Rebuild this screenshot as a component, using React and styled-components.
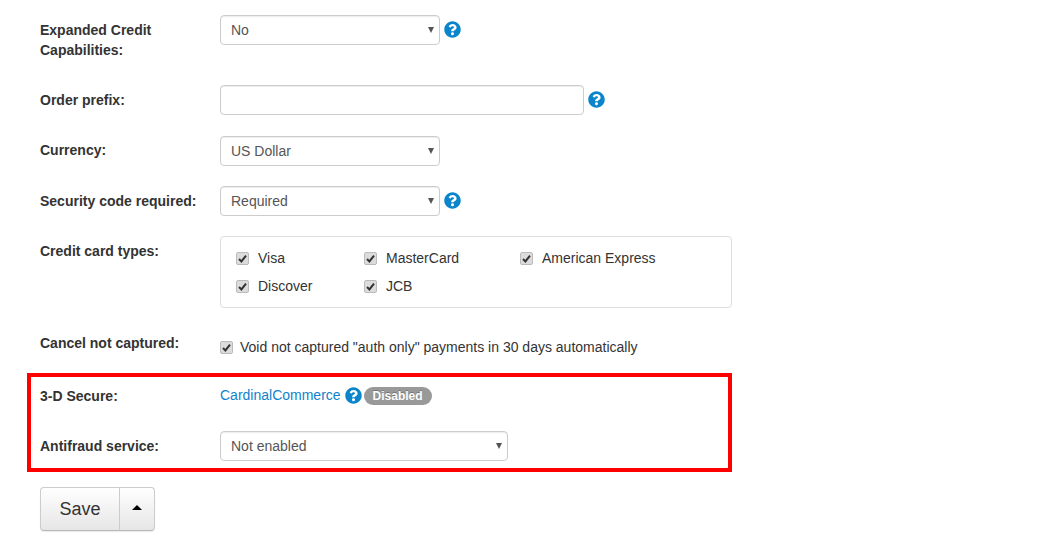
import React from "react";
import styled, { createGlobalStyle } from "styled-components";
import { FaQuestionCircle } from "react-icons/fa";

const GlobalStyle = createGlobalStyle`
  html, body {
    margin: 0;
    padding: 0;
    background: #fff;
  }
  body {
    font-family: "Liberation Sans", Arial, sans-serif;
    font-size: 14px;
    line-height: 20px;
    color: #333;
  }
`;

const Page = styled.form`
  width: 692px;
  padding: 15px 0 13px 40px;
`;

const Row = styled.div`
  display: flex;
  align-items: flex-start;
  margin-bottom: ${(p) => p.$gap ?? 20}px;
`;

const Label = styled.div`
  flex: 0 0 180px;
  padding: ${(p) => p.$top ?? 5}px 20px 0 0;
  box-sizing: border-box;
  font-weight: 700;
`;

const Controls = styled.div`
  display: flex;
  align-items: center;
  flex: 1;
  min-height: 30px;
`;

const SelectWrap = styled.div`
  position: relative;
  width: ${(p) => p.$width}px;
  height: 30px;

  &::after {
    content: "";
    position: absolute;
    right: 6px;
    top: 12px;
    border-left: 3.5px solid transparent;
    border-right: 3.5px solid transparent;
    border-top: 6px solid #555;
    pointer-events: none;
  }
`;

const NativeSelect = styled.select`
  appearance: none;
  display: block;
  width: 100%;
  height: 100%;
  box-sizing: border-box;
  padding: 0 20px 0 10px;
  border: 1px solid #ccc;
  border-radius: 4px;
  background: #fff;
  font: inherit;
  color: #555;
  box-shadow: inset 0 1px 1px rgba(0, 0, 0, 0.075);
`;

const TextInput = styled.input`
  display: block;
  width: 364px;
  height: 30px;
  box-sizing: border-box;
  padding: 0 10px;
  border: 1px solid #ccc;
  border-radius: 4px;
  font: inherit;
  box-shadow: inset 0 1px 1px rgba(0, 0, 0, 0.075);
`;

const Help = styled(FaQuestionCircle)`
  flex: none;
  width: 17px;
  height: 17px;
  margin-left: ${(p) => p.$left ?? 4}px;
  margin-top: ${(p) => p.$top ?? -2}px;
  color: #0a85cc;
`;

const CardBox = styled.div`
  display: grid;
  grid-template-columns: 128px 156px 1fr;
  grid-auto-rows: 28px;
  align-items: center;
  width: 512px;
  height: 72px;
  box-sizing: border-box;
  padding: 7px 15px;
  border: 1px solid #ddd;
  border-radius: 4px;
`;

const Check = styled.label`
  display: flex;
  align-items: center;
  gap: ${(p) => p.$gap ?? 9}px;
`;

const Box = styled.span`
  flex: none;
  display: flex;
  align-items: center;
  justify-content: center;
  width: 11px;
  height: 11px;
  border: 1px solid #bbb;
  border-radius: 2px;
  background: #dcdcdc;
`;

const Tick = () => (
  <svg width="9" height="9" viewBox="0 0 9 9" aria-hidden="true">
    <path d="M1 5 L3.4 7.4 L8 1.6" fill="none" stroke="#333" strokeWidth="2" />
  </svg>
);

const CheckItem = ({ children, gap }) => (
  <Check $gap={gap}>
    <Box>
      <Tick />
    </Box>
    <span>{children}</span>
  </Check>
);

const Highlight = styled.div`
  width: 705px;
  height: 99px;
  box-sizing: border-box;
  margin: 0 0 15px -13px;
  padding: 3px 0 0 9px;
  border: 4px solid #f00;
`;

const Link = styled.a`
  color: #0f83cd;
  text-decoration: none;
`;

const Badge = styled.span`
  display: inline-block;
  margin: 2px 0 0 2px;
  padding: 0 9px;
  height: 18px;
  border-radius: 9px;
  background: #999;
  color: #fff;
  font-size: 12px;
  font-weight: 700;
  line-height: 18px;
  text-shadow: 0 -1px 0 rgba(0, 0, 0, 0.25);
`;

const SaveGroup = styled.div`
  display: inline-flex;
  height: 44px;
  border: 1px solid #ccc;
  border-bottom-color: #b8b8b8;
  border-radius: 4px;
  box-sizing: border-box;
  background: linear-gradient(#fff, #e6e6e6);
  box-shadow: 0 1px 1px rgba(0, 0, 0, 0.08);
`;

const SaveButton = styled.button`
  width: 79px;
  padding: 0;
  border: 0;
  border-right: 1px solid #ccc;
  background: none;
  font-family: inherit;
  font-size: 18px;
  color: #333;
`;

const CaretButton = styled.button`
  display: flex;
  align-items: center;
  justify-content: center;
  width: 34px;
  padding: 0 0 4px;
  border: 0;
  background: none;

  &::before {
    content: "";
    border-left: 5px solid transparent;
    border-right: 5px solid transparent;
    border-bottom: 5px solid #000;
  }
`;

const Select = ({ width, value }) => (
  <SelectWrap $width={width}>
    <NativeSelect defaultValue={value}>
      <option>{value}</option>
    </NativeSelect>
  </SelectWrap>
);

export default function App() {
  return (
    <>
      <GlobalStyle />
      <Page onSubmit={(e) => e.preventDefault()}>
        <Row $gap={25}>
          <Label>Expanded Credit Capabilities:</Label>
          <Controls>
            <Select width={220} value="No" />
            <Help />
          </Controls>
        </Row>
        <Row $gap={21}>
          <Label>Order prefix:</Label>
          <Controls>
            <TextInput type="text" />
            <Help />
          </Controls>
        </Row>
        <Row>
          <Label $top={4}>Currency:</Label>
          <Controls>
            <Select width={220} value="US Dollar" />
          </Controls>
        </Row>
        <Row>
          <Label>Security code required:</Label>
          <Controls>
            <Select width={220} value="Required" />
            <Help />
          </Controls>
        </Row>
        <Row $gap={24}>
          <Label>Credit card types:</Label>
          <CardBox>
            <CheckItem>Visa</CheckItem>
            <CheckItem>MasterCard</CheckItem>
            <CheckItem>American Express</CheckItem>
            <CheckItem>Discover</CheckItem>
            <CheckItem>JCB</CheckItem>
          </CardBox>
        </Row>
        <Row $gap={11}>
          <Label $top={1}>Cancel not captured:</Label>
          <Controls>
            <CheckItem gap={7}>
              Void not captured "auth only" payments in 30 days automatically
            </CheckItem>
          </Controls>
        </Row>
        <Highlight>
          <Row $gap={21}>
            <Label $top={6}>3-D Secure:</Label>
            <Controls>
              <Link href="#">CardinalCommerce</Link>
              <Help $top={0} />
              <Badge>Disabled</Badge>
            </Controls>
          </Row>
          <Row $gap={0}>
            <Label>Antifraud service:</Label>
            <Controls>
              <Select width={288} value="Not enabled" />
            </Controls>
          </Row>
        </Highlight>
        <SaveGroup>
          <SaveButton type="submit">Save</SaveButton>
          <CaretButton type="button" aria-label="More" />
        </SaveGroup>
      </Page>
    </>
  );
}
